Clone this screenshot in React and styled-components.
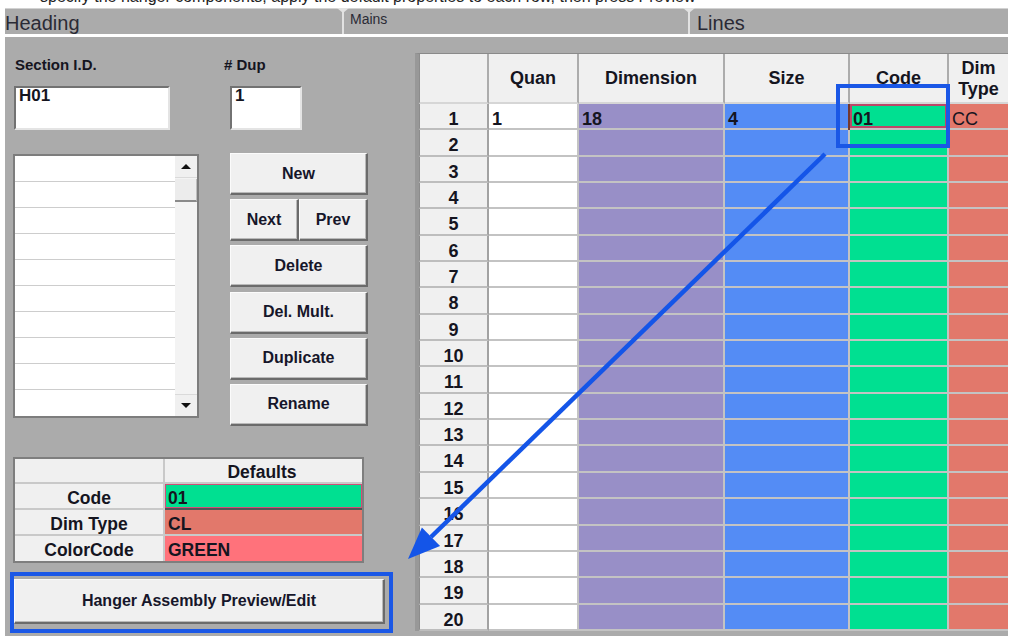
import React from 'react';
import styled, { createGlobalStyle, css } from 'styled-components';

const GlobalStyle = createGlobalStyle`
  html, body { margin: 0; padding: 0; background: #fff; }
  body { font-family: "Liberation Sans", Arial, sans-serif; color: #15151f; }
  * { box-sizing: border-box; }
`;

const Screen = styled.div`
  position: relative;
  width: 1023px;
  height: 636px;
  overflow: hidden;
  background: #fff;
`;

/* the end of the instruction line above the form, scrolled mostly out of view */
const Caption = styled.div`
  height: 8px;
  overflow: hidden;
  display: flex;
  align-items: flex-end;
  padding: 0 0 3px 40px;
  font-size: 16px;
  line-height: 16px;
  color: #222;
  white-space: nowrap;
`;

const TabBar = styled.div`
  display: flex;
  margin-left: 5px;
  width: 1003px;
  height: 26px;
  background: #ababab;
  border-top: 1px solid #d2d2d2;
`;

const Tab = styled.div`
  position: relative;
  flex: none;
  width: ${p => p.$w}px;
  padding-left: ${p => p.$pad || 0}px;
  color: #2a2a35;
  font-size: ${p => (p.$small ? '14px' : '20px')};
  line-height: ${p => (p.$small ? '20px' : '29px')};
  white-space: nowrap;
  ${p =>
    p.$divided &&
    css`
      border-left: 2px solid #e2e2e2;
      &::before {
        content: '';
        position: absolute;
        left: -7px;
        top: -1px;
        border-left: 6px solid transparent;
        border-right: 6px solid transparent;
        border-top: 5px solid #e2e2e2;
      }
    `}
`;

const Panel = styled.div`
  display: flex;
  margin: 3px 0 0 5px;
  width: 1003px;
  height: 599px;
  background: #ababab;
`;

const LeftColumn = styled.div`
  flex: none;
  width: 410px;
  display: flex;
  flex-direction: column;
`;

const FieldRow = styled.div`
  display: flex;
  padding: 19px 0 0 9px;
`;

const Field = styled.div`
  display: flex;
  flex-direction: column;
  margin-left: ${p => p.$offset || 0}px;
`;

const FieldLabel = styled.div`
  height: 18px;
  padding-left: ${p => p.$indent || 0}px;
  font-weight: 700;
  font-size: 15px;
  line-height: 18px;
  white-space: nowrap;
`;

const TextBox = styled.div`
  margin-top: 12px;
  margin-left: ${p => p.$indent || 0}px;
  width: ${p => p.$w}px;
  height: 44px;
  background: #fff;
  border: 2px solid;
  border-color: #727272 #e4e4e4 #e4e4e4 #727272;
  padding: 1px 3px 0;
  font-weight: 700;
  font-size: 17px;
  line-height: 14px;
`;

const ListRow = styled.div`
  display: flex;
  align-items: flex-start;
  margin-top: 23px;
  padding-left: 8px;
`;

const ListBox = styled.div`
  display: flex;
  margin-top: 1px;
  width: 186px;
  height: 264px;
  background: #fff;
  border: 2px solid #7d7d7d;
`;

const ListItems = styled.div`
  flex: 1;
  display: flex;
  flex-direction: column;
`;

const ListItem = styled.div`
  height: 26px;
  &:not(:last-child) {
    border-bottom: 1px solid #cdcdcd;
  }
`;

const ScrollBar = styled.div`
  flex: none;
  width: 22px;
  display: flex;
  flex-direction: column;
  background: #f3f3f3;
`;

const ScrollButton = styled.div`
  height: 22px;
  display: flex;
  align-items: center;
  justify-content: center;
  background: #f0f0f0;
  border-${p => (p.$down ? 'top' : 'bottom')}: 1px solid #dadada;
  margin-top: ${p => (p.$down ? 'auto' : '0')};

  &::after {
    content: '';
    border-left: 5px solid transparent;
    border-right: 5px solid transparent;
    ${p =>
      p.$down
        ? css`border-top: 5px solid #111;`
        : css`border-bottom: 5px solid #111;`}
  }
`;

const ScrollThumb = styled.div`
  height: 23px;
  margin-top: 1px;
  background: #ececec;
  border-bottom: 2px solid #8a8a8a;
  border-right: 1px solid #bdbdbd;
`;

const ButtonStack = styled.div`
  display: flex;
  flex-direction: column;
  gap: 4.2px;
  margin-left: 31px;
  width: 138px;
`;

const Button = styled.div`
  flex: 1 1 auto;
  height: ${p => p.$h || 42}px;
  display: flex;
  align-items: center;
  justify-content: center;
  background: #f0f0f0;
  border-top: 1px solid #fbfbfb;
  border-left: 1px solid #fbfbfb;
  border-right: 2px solid #6b6b6b;
  border-bottom: 2px solid #6b6b6b;
  box-shadow: inset -1px -1px 0 #b9b9b9;
  font-weight: 700;
  font-size: 16px;
  color: #16162a;
  white-space: nowrap;
`;

const ButtonPair = styled.div`
  display: flex;
  & > ${Button} {
    flex: 1 1 0;
  }
`;

const Defaults = styled.div`
  display: grid;
  grid-template-columns: 150px 197px;
  grid-template-rows: 25px 26px 26px 25px;
  margin: 31px 0 0 8px;
  width: 351px;
  border: 2px solid #7e7e7e;
`;

const DefaultsCell = styled.div`
  display: flex;
  align-items: center;
  justify-content: ${p => (p.$label ? 'center' : 'flex-start')};
  padding: 4px ${p => (p.$label ? 0 : 3)}px 0;
  background: ${p => p.$bg || '#f0f0f0'};
  border-right: ${p => (p.$label ? '2px solid #c9c9c9' : 'none')};
  border-bottom: ${p => (p.$last ? 'none' : '2px solid #c9c9c9')};
  font-weight: 700;
  font-size: 17.5px;
  line-height: 20px;
  white-space: nowrap;
  ${p =>
    p.$header &&
    css`
      justify-content: center;
      padding-left: 0;
    `}
  ${p =>
    p.$selected &&
    css`
      box-shadow: inset 0 0 0 1px #d24d78;
      border-bottom-color: #4d5656;
    `}
`;

const HangerFrame = styled.div`
  margin: 9px 0 0 5px;
  width: 383px;
  height: 61px;
  border: 4px solid #1a57e6;
  padding: 3px 4px 5px 0;
  display: flex;
`;

const GridArea = styled.div`
  flex: 1;
  padding-top: 16px;
  display: flex;
  align-items: flex-start;
`;

const Sheet = styled.div`
  display: grid;
  grid-template-columns: 70px 90px 146px 125px 99px 59px;
  grid-template-rows: 50px repeat(20, 26.35px);
  border-left: 4px solid #989898;
  border-top: 1px solid #8a8a8a;
  background: #fff;
`;

const HeadCell = styled.div`
  display: flex;
  align-items: center;
  justify-content: center;
  text-align: center;
  padding-top: 1px;
  background: #f0f0f0;
  border-right: ${p => (p.$end ? 'none' : '2px solid #acacac')};
  border-bottom: 2px solid #d6d6d6;
  border-left: ${p => (p.$first ? '1px solid #8c8c8c' : 'none')};
  font-weight: 700;
  font-size: 18px;
  line-height: 21px;
`;

const RowHead = styled.div`
  display: flex;
  justify-content: center;
  padding-top: 5px;
  background: #f0f0f0;
  border-left: 1px solid #8c8c8c;
  border-right: 2px solid #a2a2a2;
  border-bottom: 2px solid #bdbdbd;
  font-weight: 700;
  font-size: 18px;
  line-height: 20px;
`;

const Cell = styled.div`
  position: relative;
  padding: 5px 0 0 3px;
  background: ${p => p.$bg};
  border-right: ${p => (p.$end ? 'none' : '2px solid #c3c3c3')};
  border-bottom: 2px solid #c3c3c3;
  font-weight: ${p => (p.$plain ? 400 : 700)};
  font-size: 18px;
  line-height: 20px;
  white-space: nowrap;
  ${p =>
    p.$focus &&
    css`
      box-shadow: inset 0 0 0 2px #bd4668, -2px 0 0 #74392f;
    `}
`;

const Annotations = styled.svg`
  position: absolute;
  left: 0;
  top: 0;
  pointer-events: none;
`;

const columns = [
  { key: 'quan', bg: '#ffffff' },
  { key: 'dim', bg: '#988fc7' },
  { key: 'size', bg: '#548cf5' },
  { key: 'code', bg: '#00e091' },
  { key: 'type', bg: '#e2786b' },
];

const firstRow = { quan: '1', dim: '18', size: '4', code: '01', type: 'CC' };

const rows = Array.from({ length: 20 }, (_, i) => i + 1);

export default function App() {
  return (
    <Screen>
      <GlobalStyle />
      <Caption>specify the hanger components, apply the default properties to each row, then press Preview</Caption>

      <TabBar>
        <Tab $w={337}>Heading</Tab>
        <Tab $w={346} $pad={6} $small $divided>Mains</Tab>
        <Tab $w={320} $pad={7} $divided>Lines</Tab>
      </TabBar>

      <Panel>
        <LeftColumn>
          <FieldRow>
            <Field>
              <FieldLabel $indent={1}>Section I.D.</FieldLabel>
              <TextBox $w={156}>H01</TextBox>
            </Field>
            <Field $offset={54}>
              <FieldLabel># Dup</FieldLabel>
              <TextBox $w={72} $indent={6}>1</TextBox>
            </Field>
          </FieldRow>

          <ListRow>
            <ListBox>
              <ListItems>
                {Array.from({ length: 10 }, (_, i) => (
                  <ListItem key={i} />
                ))}
              </ListItems>
              <ScrollBar>
                <ScrollButton />
                <ScrollThumb />
                <ScrollButton $down />
              </ScrollBar>
            </ListBox>

            <ButtonStack>
              <Button>New</Button>
              <ButtonPair>
                <Button>Next</Button>
                <Button>Prev</Button>
              </ButtonPair>
              <Button>Delete</Button>
              <Button>Del. Mult.</Button>
              <Button>Duplicate</Button>
              <Button>Rename</Button>
            </ButtonStack>
          </ListRow>

          <Defaults>
            <DefaultsCell $label />
            <DefaultsCell $header>Defaults</DefaultsCell>
            <DefaultsCell $label>Code</DefaultsCell>
            <DefaultsCell $bg="#00e091" $selected>01</DefaultsCell>
            <DefaultsCell $label>Dim Type</DefaultsCell>
            <DefaultsCell $bg="#e2786b">CL</DefaultsCell>
            <DefaultsCell $label $last>ColorCode</DefaultsCell>
            <DefaultsCell $bg="#ff727b" $last>GREEN</DefaultsCell>
          </Defaults>

          <HangerFrame>
            <Button $h={45}>Hanger Assembly Preview/Edit</Button>
          </HangerFrame>
        </LeftColumn>

        <GridArea>
          <Sheet>
            <HeadCell $first />
            <HeadCell>Quan</HeadCell>
            <HeadCell>Dimension</HeadCell>
            <HeadCell>Size</HeadCell>
            <HeadCell>Code</HeadCell>
            <HeadCell $end>
              Dim
              <br />
              Type
            </HeadCell>
            {rows.map(n => (
              <React.Fragment key={n}>
                <RowHead>{n}</RowHead>
                {columns.map((c, ci) => (
                  <Cell
                    key={c.key}
                    $bg={c.bg}
                    $end={ci === columns.length - 1}
                    $plain={c.key === 'type'}
                    $focus={n === 1 && c.key === 'code'}
                  >
                    {n === 1 ? firstRow[c.key] : ''}
                  </Cell>
                ))}
              </React.Fragment>
            ))}
          </Sheet>
        </GridArea>
      </Panel>

      <Annotations width="1023" height="636" viewBox="0 0 1023 636">
        <rect x="838" y="86" width="110" height="60" fill="none" stroke="#1a57e6" strokeWidth="4" />
        <line x1="825" y1="154" x2="431" y2="537" stroke="#1455e8" strokeWidth="4.5" />
        <polygon points="408,559 421.9,527.4 440.1,546" fill="#1455e8" />
      </Annotations>
    </Screen>
  );
}
